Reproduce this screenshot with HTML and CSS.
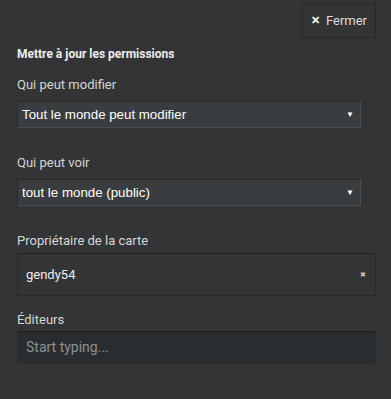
FILE: index.html
```html
<!DOCTYPE html>
<html lang="fr">
<head>
    <meta charset="UTF-8">
    <meta name="viewport" content="width=device-width, initial-scale=1.0">
    <title>Permissions</title>
    <link rel="stylesheet" href="styles.css">
</head>
<body>
    <div class="panel">
        <div class="panel-top">
            <button class="close-btn" type="button"><span class="close-x">&#x2715;</span> Fermer</button>
        </div>
        <h4 class="panel-title">Mettre à jour les permissions</h4>
        <div class="field">
            <label class="field-label">Qui peut modifier</label>
            <div class="fake-select">
                <span>Tout le monde peut modifier</span>
                <span class="arrow">&#9660;</span>
            </div>
        </div>
        <div class="field">
            <label class="field-label">Qui peut voir</label>
            <div class="fake-select">
                <span>tout le monde (public)</span>
                <span class="arrow">&#9660;</span>
            </div>
        </div>
        <div class="field field-owner">
            <label class="field-label">Propriétaire de la carte</label>
            <div class="owner-box">
                <span>gendy54</span>
                <span class="remove">&#x2716;</span>
            </div>
        </div>
        <div class="field field-editors">
            <label class="field-label">Éditeurs</label>
            <input class="typing" type="text" placeholder="Start typing...">
        </div>
    </div>
</body>
</html>
```

FILE: styles.css
```css
html, body {
    margin: 0;
    height: 100%;
}
body {
    background: #323436;
    font-family: 'Roboto', 'Open Sans', sans-serif;
    color: #eeeeee;
}
.panel {
    padding: 0 15px 0 17px;
}
.panel-top {
    display: flex;
    justify-content: flex-end;
    padding-top: 3px;
}
.close-btn {
    width: 74px;
    height: 35px;
    background: #323436;
    border: 1px solid #262829;
    color: #dddddd;
    font-family: 'Roboto', sans-serif;
    font-size: 13px;
    display: flex;
    align-items: center;
    justify-content: center;
    gap: 6px;
    padding: 0;
    cursor: pointer;
}
.close-x {
    font-size: 11px;
    font-weight: bold;
    color: #ffffff;
}
.panel-title {
    margin: 9px 0 16px;
    font-size: 12px;
    font-weight: bold;
    color: #eeeeee;
}
.field {
    margin-bottom: 27px;
}
.field-label {
    display: block;
    font-size: 13px;
    line-height: 15px;
    color: #d6d6d6;
    margin-bottom: 9px;
}
.field-owner {
    margin-bottom: 16px;
}
.field-owner .field-label {
    margin-bottom: 5px;
}
.field-editors .field-label {
    margin-bottom: 4px;
}
.fake-select {
    width: 344px;
    height: 27px;
    box-sizing: border-box;
    background: #3a3d3f;
    border: 1px solid #27292a;
    border-right-color: #4a4d4f;
    border-bottom-color: #4a4d4f;
    display: flex;
    align-items: center;
    justify-content: space-between;
    padding: 0 6px 0 4px;
    font-family: 'Liberation Sans', Arial, sans-serif;
    font-size: 13.3px;
    color: #ffffff;
}
.arrow {
    font-size: 8px;
}
.owner-box {
    width: 359px;
    height: 43px;
    box-sizing: border-box;
    border: 1px solid #27292a;
    border-top-color: #1f2122;
    display: flex;
    align-items: center;
    justify-content: space-between;
    padding: 0 9px 0 8px;
    font-size: 13px;
    color: #eeeeee;
}
.remove {
    font-size: 7px;
    color: #cccccc;
}
.typing {
    display: block;
    width: 359px;
    height: 32px;
    box-sizing: border-box;
    background: #2a2d2f;
    border: 1px solid #27292a;
    border-top-color: #1d1f20;
    padding: 0 8px;
    font-family: 'Roboto', sans-serif;
    font-size: 14px;
    color: #eeeeee;
    outline: none;
}
.typing::placeholder {
    color: #8e9193;
}
```
